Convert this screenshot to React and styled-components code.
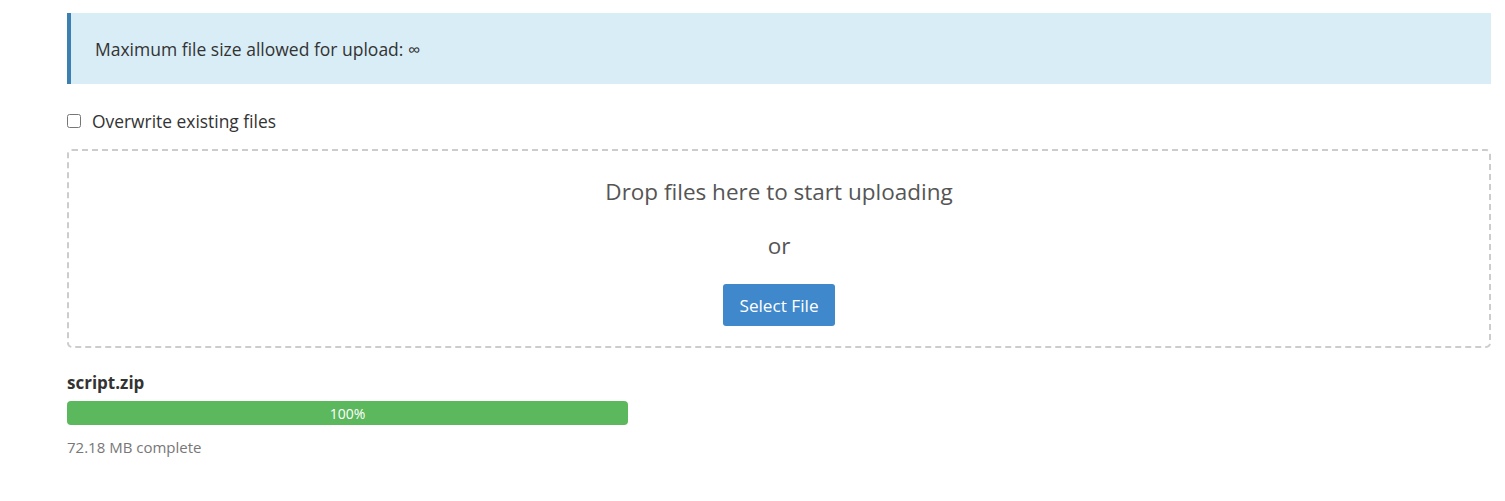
import styled, { createGlobalStyle } from "styled-components";

const GlobalStyle = createGlobalStyle`
  body {
    margin: 0;
    background: #fff;
    font-family: "Open Sans", "Noto Sans", sans-serif;
    color: #333;
  }
`;

const Page = styled.div`
  padding: 13px 14px 30px 67px;
`;

const Alert = styled.div`
  display: flex;
  align-items: center;
  height: 71px;
  box-sizing: border-box;
  padding: 0 24px;
  background: #d9edf7;
  border-left: 4px solid #3c7fb1;
  font-size: 17.5px;
  color: #333;
`;

const CheckRow = styled.label`
  display: flex;
  align-items: center;
  gap: 11px;
  margin-top: 25px;
  font-size: 17.4px;
  color: #333;

  input {
    margin: 0;
    width: 14px;
    height: 14px;
  }
`;

const DropZone = styled.div`
  margin-top: 16px;
  height: 199px;
  box-sizing: border-box;
  border: 2px dashed #ccc;
  border-radius: 5px;
  display: flex;
  flex-direction: column;
  align-items: center;
  padding-top: 26px;
  color: #555;
`;

const DropText = styled.p`
  margin: 0;
  font-size: 22.5px;
  line-height: 30px;
  color: ${(p) => p.$muted ? "#666" : "#555"};
  margin-bottom: ${(p) => p.$gap || 0}px;
`;

const SelectButton = styled.button`
  margin-top: 23px;
  width: 112px;
  height: 42px;
  border: none;
  border-radius: 3px;
  background: #3e88cb;
  color: #fff;
  font-family: inherit;
  font-size: 17.2px;
  cursor: pointer;
`;

const FileBlock = styled.div`
  margin-top: 25px;
  width: 561px;
`;

const FileName = styled.div`
  font-size: 17px;
  font-weight: 700;
  color: #333;
  line-height: 20px;
`;

const Bar = styled.div`
  margin-top: 8px;
  height: 24px;
  border-radius: 4px;
  background: #f5f5f5;
  overflow: hidden;
`;

const BarFill = styled.div`
  height: 100%;
  background: #5cb85c;
  color: #fff;
  font-size: 14px;
  display: flex;
  align-items: center;
  justify-content: center;
`;

const Status = styled.div`
  margin-top: 12px;
  font-size: 15px;
  color: #777;
`;

export default function App() {
  const progress = 100;
  return (
    <>
      <GlobalStyle />
      <Page>
        <Alert>Maximum file size allowed for upload: ∞</Alert>
        <CheckRow>
          <input type="checkbox" />
          Overwrite existing files
        </CheckRow>
        <DropZone>
          <DropText $gap={24}>Drop files here to start uploading</DropText>
          <DropText>or</DropText>
          <SelectButton>Select File</SelectButton>
        </DropZone>
        <FileBlock>
          <FileName>script.zip</FileName>
          <Bar>
            <BarFill style={{ width: `${progress}%` }}>{progress}%</BarFill>
          </Bar>
          <Status>72.18 MB complete</Status>
        </FileBlock>
      </Page>
    </>
  );
}
